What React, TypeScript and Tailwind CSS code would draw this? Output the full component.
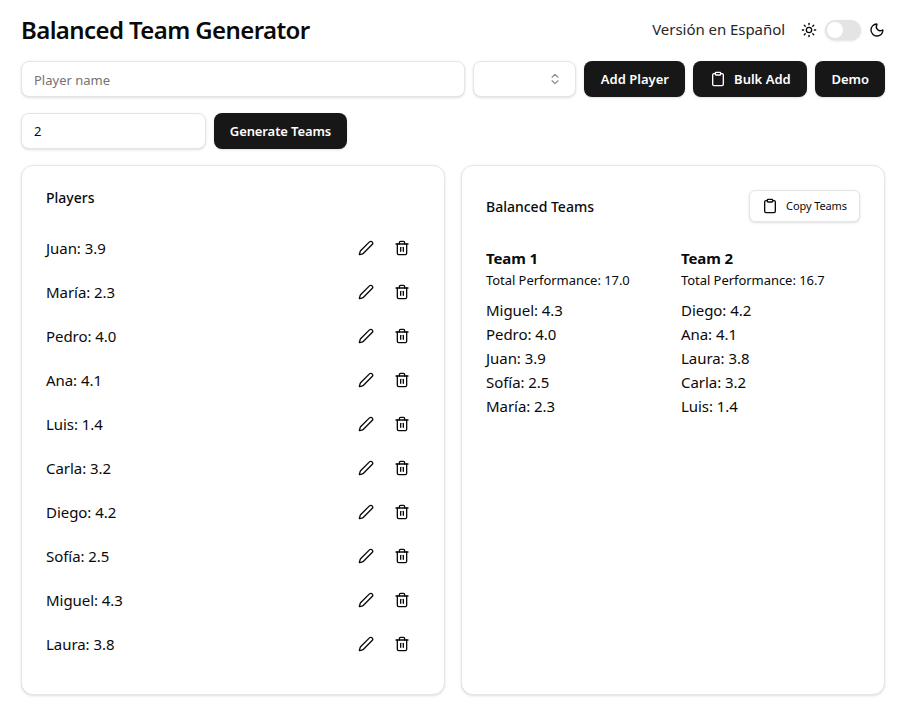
import { ChevronsUpDown, Clipboard, Moon, Pen, Sun, Trash2 } from "lucide-react";

const players = [
  "Juan: 3.9",
  "María: 2.3",
  "Pedro: 4.0",
  "Ana: 4.1",
  "Luis: 1.4",
  "Carla: 3.2",
  "Diego: 4.2",
  "Sofía: 2.5",
  "Miguel: 4.3",
  "Laura: 3.8",
];

const teams = [
  { name: "Team 1", total: "17.0", members: ["Miguel: 4.3", "Pedro: 4.0", "Juan: 3.9", "Sofía: 2.5", "María: 2.3"] },
  { name: "Team 2", total: "16.7", members: ["Diego: 4.2", "Ana: 4.1", "Laura: 3.8", "Carla: 3.2", "Luis: 1.4"] },
];

export default function App() {
  return (
    <div className="min-h-[709px] bg-white pl-[21px] pr-[18px] pt-[15px] font-['Noto_Sans',sans-serif] text-[#0a0a0a]">
      {/* Header */}
      <div className="flex h-[30px] items-center justify-between">
        <h1 className="text-[24px] font-semibold leading-8 tracking-[-0.6px] text-[#0a0a0a]">Balanced Team Generator</h1>
        <div className="flex items-center">
          <span className="mb-0.5 mr-4 text-[15px] tracking-[-0.05px] text-[#27272a]">Versión en Español</span>
          <Sun className="h-4 w-4" />
          <div className="mx-2 flex h-5 w-9 items-center rounded-full bg-[#e4e4e4] p-0.5 shadow-sm">
            <div className="h-4 w-4 rounded-full bg-white" />
          </div>
          <Moon className="h-4 w-4" />
        </div>
      </div>

      {/* Add player */}
      <div className="mt-4 flex gap-2">
        <input
          placeholder="Player name"
          className="h-9 min-w-0 flex-1 rounded-lg border border-[#e5e5e5] bg-white px-3 pt-0.5 text-[13px] shadow-sm outline-none placeholder:text-[#737373]"
        />
        <div className="flex h-9 w-[103px] items-center justify-end rounded-lg border border-[#e5e5e5] bg-white pr-[13px] shadow-sm">
          <ChevronsUpDown className="h-3.5 w-3.5 text-[#8a8a8a]" />
        </div>
        <button className="h-9 w-[101px] rounded-lg bg-[#171717] pt-0.5 text-[13px] font-semibold text-white shadow-sm">Add Player</button>
        <button className="flex h-9 w-[114px] items-center justify-center gap-2 rounded-lg bg-[#171717] pt-0.5 text-[13px] font-semibold text-white shadow-sm">
          <Clipboard className="-mt-0.5 h-4 w-4" />
          Bulk Add
        </button>
        <button className="h-9 rounded-lg bg-[#171717] px-4 pt-0.5 text-[13px] font-semibold text-white shadow-sm">Demo</button>
      </div>

      {/* Generate */}
      <div className="mt-4 flex gap-2">
        <input
          defaultValue="2"
          className="h-9 w-[185px] rounded-lg border border-[#e5e5e5] bg-white px-3 text-[13px] shadow-sm outline-none"
        />
        <button className="h-9 w-[133px] rounded-lg bg-[#171717] pt-px text-[13px] font-semibold tracking-[-0.1px] text-white shadow-sm">Generate Teams</button>
      </div>

      <div className="mt-4 grid grid-cols-2 gap-4">
        {/* Players */}
        <div className="h-[530px] rounded-xl border border-[#e5e5e5] bg-white px-6 pt-[22px] shadow-sm">
          <h2 className="text-[14px] font-medium leading-5">Players</h2>
          <ul className="mt-[18px]">
            {players.map((player) => (
              <li key={player} className="flex h-11 items-center justify-between pr-[10px] text-[15px] tracking-[-0.05px]">
                <span>{player}</span>
                <div className="flex items-center gap-5">
                  <Pen className="h-4 w-4" />
                  <Trash2 className="h-4 w-4" />
                </div>
              </li>
            ))}
          </ul>
        </div>

        {/* Balanced teams */}
        <div className="h-[530px] rounded-xl border border-[#e5e5e5] bg-white px-6 pt-6 shadow-sm">
          <div className="flex h-8 items-center justify-between">
            <h2 className="text-[14px] font-medium">Balanced Teams</h2>
            <button className="flex h-8 w-[111px] items-center justify-center gap-2 rounded-md border border-[#e5e5e5] bg-white text-[11px] tracking-[-0.1px] shadow-sm">
              <Clipboard className="h-4 w-4" />
              Copy Teams
            </button>
          </div>
          <div className="mt-[26px] grid grid-cols-2 gap-4">
            {teams.map((team) => (
              <div key={team.name}>
                <h3 className="text-[15px] font-bold leading-5 tracking-[-0.1px]">{team.name}</h3>
                <p className="mt-0.5 text-[13px] leading-5 tracking-[-0.05px]">Total Performance: {team.total}</p>
                <ul className="mt-[8px]">
                  {team.members.map((member) => (
                    <li key={member} className="text-[15px] leading-6 tracking-[-0.05px]">{member}</li>
                  ))}
                </ul>
              </div>
            ))}
          </div>
        </div>
      </div>
    </div>
  );
}
